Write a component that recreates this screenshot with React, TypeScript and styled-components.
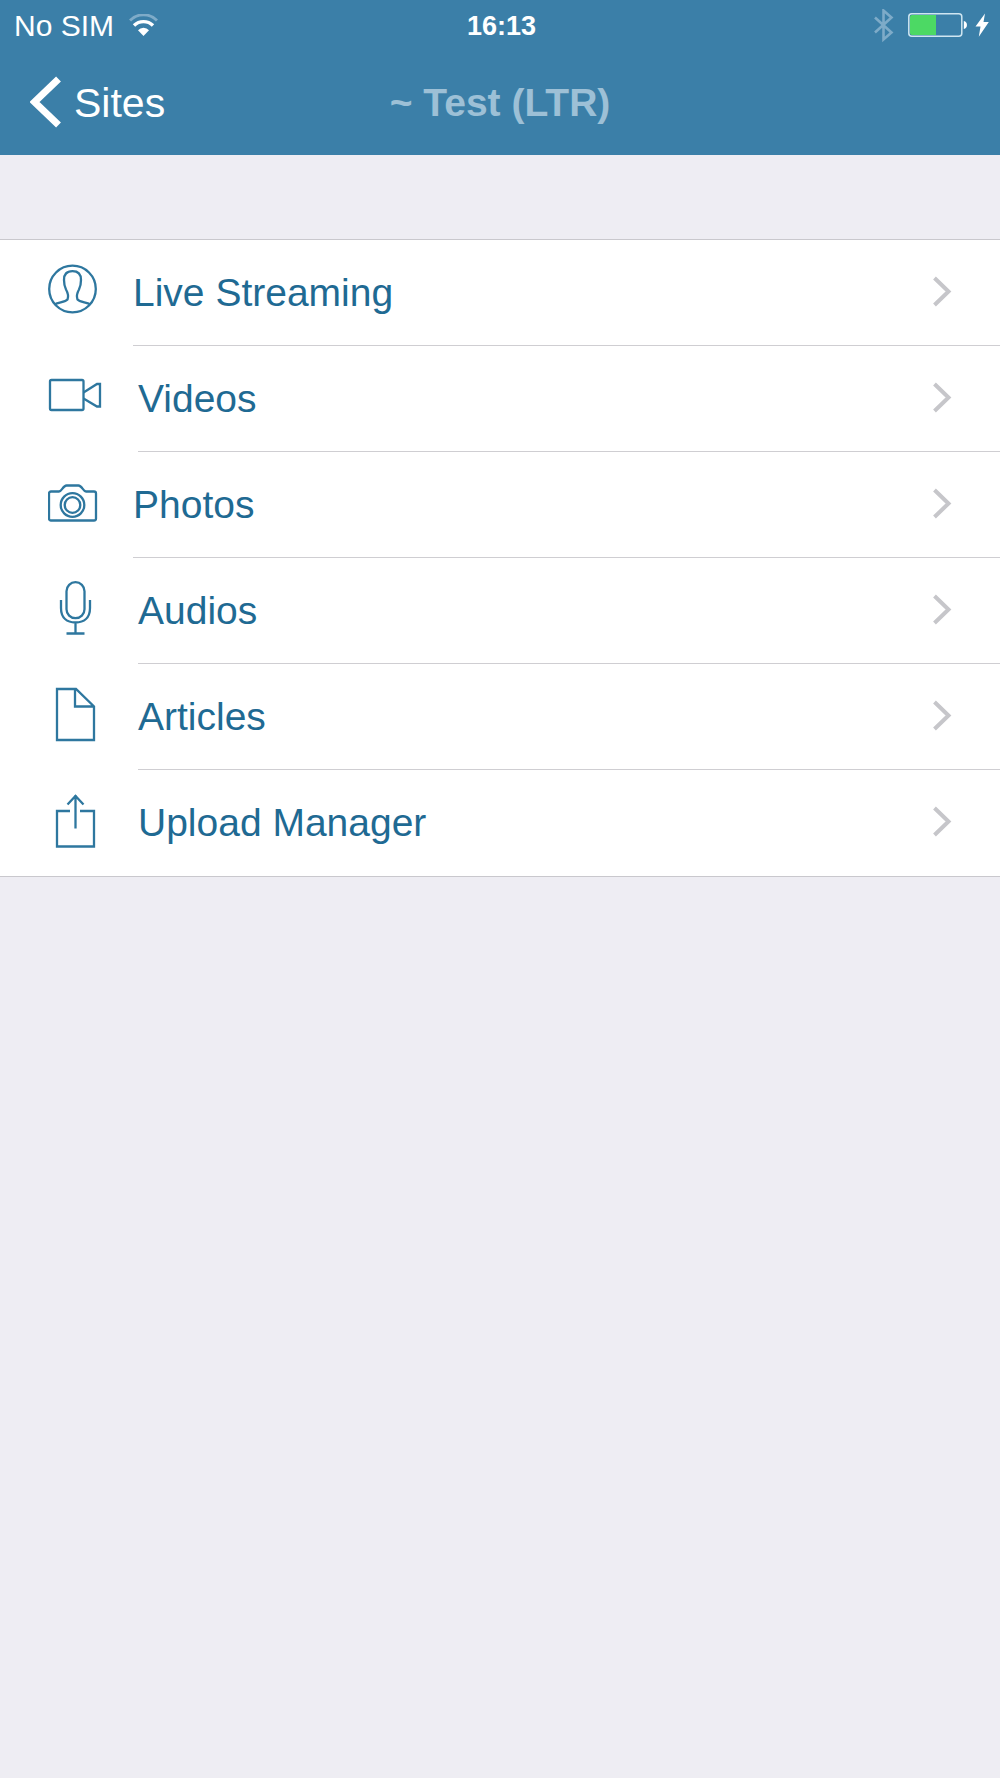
import React from "react";
import styled, { createGlobalStyle } from "styled-components";

const GlobalStyle = createGlobalStyle`
  *, *::before, *::after { box-sizing: border-box; }
  body {
    margin: 0;
    background: #eeedf3;
    font-family: "Liberation Sans", Arial, Helvetica, sans-serif;
  }
`;

const Page = styled.div`
  min-height: 100vh;
  background: #eeedf3;
`;

const Header = styled.header`
  background: #3b7fa8;
  color: #fff;
`;

const Bar = styled.div<{ $height: number }>`
  display: grid;
  grid-template-columns: 1fr auto 1fr;
  align-items: center;
  height: ${(p) => p.$height}px;
`;

const StatusBar = styled(Bar)`
  padding: 0 11px 0 14px;
`;

const NavBar = styled(Bar)`
  padding: 0 30px;
`;

const Cluster = styled.div<{ $end?: boolean; $gap: number }>`
  display: flex;
  align-items: center;
  justify-content: ${(p) => (p.$end ? "flex-end" : "flex-start")};
  gap: ${(p) => p.$gap}px;
`;

const Carrier = styled.span`
  font-size: 30px;
  line-height: 34px;
`;

const Clock = styled.time`
  font-size: 27px;
  line-height: 34px;
  font-weight: 700;
`;

const BackButton = styled.button`
  display: flex;
  align-items: center;
  justify-self: start;
  gap: 12px;
  padding: 0;
  border: 0;
  background: none;
  color: inherit;
  font: inherit;
  font-size: 41px;
  line-height: 50px;
  cursor: pointer;
`;

const Title = styled.h1`
  margin: 0;
  font-size: 39px;
  line-height: 50px;
  font-weight: 700;
  color: #9dc0d6;
`;

const Menu = styled.ul`
  list-style: none;
  margin: 84px 0 0;
  padding: 0;
  background: #fff;
  border-top: 1px solid #c9c8cd;
  border-bottom: 1px solid #c9c8cd;
`;

const Row = styled.a`
  display: flex;
  align-items: stretch;
  gap: 35px;
  padding-left: 48px;
  color: #1f6a93;
  font-size: 39px;
  line-height: 45px;
  text-decoration: none;
`;

const IconSlot = styled.span<{ $width: number }>`
  display: flex;
  align-items: center;
  flex: 0 0 ${(p) => p.$width}px;
`;

const RowBody = styled.span`
  display: flex;
  flex: 1;
  align-items: center;
  justify-content: space-between;
  padding: 30px 48px 30px 0;
  border-bottom: 1px solid #cfced2;

  li:last-child & {
    border-bottom-color: transparent;
  }
`;

const Drawing = styled.svg`
  display: block;
  flex: none;
  fill: none;
`;

const icons = {
  person: (
    <>
      <circle cx="24.5" cy="26" r="23.3" />
      <path d="M6.500 41.500C11 39.300 17.500 39 19.500 36.500C20.800 33 20 30 18 26.500C16.500 23.500 16 21.500 16 17C16 11 18.500 8.200 24.500 8.200S33 11 33 17C33 21.500 32.500 23.500 31 26.500C29 30 28.200 33 29.500 36.500C31.500 39 38 39.300 42.500 41.500" />
    </>
  ),
  video: (
    <>
      <rect x="2" y="11" width="33.500" height="30" rx="1.500" />
      <path d="M35.500 23.500L49 15H52V37.500H49L35.500 29.500" />
    </>
  ),
  camera: (
    <>
      <path d="M3 16.500H11C14 16.500 15 10.500 18.500 10.500H30.500C34 10.500 35 16.500 38 16.500H46A2 2 0 0 1 48 18.500V43.500A2 2 0 0 1 46 45.500H3A2 2 0 0 1 1 43.500V18.500A2 2 0 0 1 3 16.500Z" />
      <circle cx="24.500" cy="30" r="11.800" />
      <circle cx="24.500" cy="30" r="7.800" />
    </>
  ),
  microphone: (
    <>
      <rect x="18.500" y="1.200" width="18" height="36" rx="9" />
      <path d="M13 19V27C13 37 19 41.500 27.500 41.500S42 37 42 27V19M27.500 41.500V52.500M18.500 52.500H36.500" />
    </>
  ),
  page: <path d="M9 2H28L46 19.500V53H9ZM27 2V19.500H46" />,
  upload: <path d="M22 18H9V53.500H46V18H32M27.500 35.500V2M19.500 11.500L27.500 3L35.500 11.500" />,
};

type IconName = keyof typeof icons;

const items: { label: string; icon: IconName; width: number }[] = [
  { label: "Live Streaming", icon: "person", width: 50 },
  { label: "Videos", icon: "video", width: 55 },
  { label: "Photos", icon: "camera", width: 50 },
  { label: "Audios", icon: "microphone", width: 55 },
  { label: "Articles", icon: "page", width: 55 },
  { label: "Upload Manager", icon: "upload", width: 55 },
];

const WifiIcon = () => (
  <Drawing width="29" height="24" viewBox="0 0 29 24" aria-hidden="true">
    <path d="M1 6.500A19 19 0 0 1 28 6.500" stroke="#7eabc8" strokeWidth="3" />
    <path d="M5 11.500A13.500 13.500 0 0 1 24 11.500" stroke="#fff" strokeWidth="3.400" />
    <path d="M9 16.300A7.300 7.300 0 0 1 20 16.300L14.500 22Z" fill="#fff" />
  </Drawing>
);

const BluetoothIcon = () => (
  <Drawing width="20" height="34" viewBox="0 0 20 34" aria-hidden="true">
    <path d="M1 8.500L17.500 23.500L9.500 30.500V1.500L17.500 8.500L1 23.500" stroke="#7eabc8" strokeWidth="2.600" />
  </Drawing>
);

const BatteryIcon = () => (
  <Drawing width="60" height="26" viewBox="0 0 60 26" aria-hidden="true">
    <rect x="0.800" y="0.800" width="53" height="22.400" rx="3" stroke="#cfe6f1" strokeWidth="1.500" />
    <path d="M4 2H28V22H4A2 2 0 0 1 2 20V4A2 2 0 0 1 4 2Z" fill="#4cd964" />
    <path d="M55.800 8C60 8.500 60 15.500 55.800 16Z" fill="#fff" />
  </Drawing>
);

const BoltIcon = () => (
  <Drawing width="14" height="26" viewBox="0 0 14 26" aria-hidden="true">
    <path d="M10 0.500L0.500 13.500H5.500L3.800 23.800L13.800 9H8.500Z" fill="#fff" />
  </Drawing>
);

export default function App() {
  return (
    <Page>
      <GlobalStyle />
      <Header>
        <StatusBar $height={51}>
          <Cluster $gap={15}>
            <Carrier>No SIM</Carrier>
            <WifiIcon />
          </Cluster>
          <Clock>16:13</Clock>
          <Cluster $end $gap={14}>
            <BluetoothIcon />
            <Cluster $gap={7}>
              <BatteryIcon />
              <BoltIcon />
            </Cluster>
          </Cluster>
        </StatusBar>
        <NavBar $height={104}>
          <BackButton type="button">
            <Drawing width="32" height="54" viewBox="0 0 32 54" aria-hidden="true">
              <path d="M28.500 3L4.500 26L28.500 49" stroke="#fff" strokeWidth="7" />
            </Drawing>
            Sites
          </BackButton>
          <Title>~ Test (LTR)</Title>
        </NavBar>
      </Header>
      <Menu>
        {items.map(({ label, icon, width }) => (
          <li key={label}>
            <Row href="#">
              <IconSlot $width={width}>
                <Drawing
                  width={width}
                  height="60"
                  viewBox={`0 0 ${width} 60`}
                  stroke="#2e779f"
                  strokeWidth="2.300"
                  aria-hidden="true"
                >
                  {icons[icon]}
                </Drawing>
              </IconSlot>
              <RowBody>
                {label}
                <Drawing width="20" height="34" viewBox="0 0 20 34" aria-hidden="true">
                  <path d="M2.500 2L16.500 15.500L2.500 29" stroke="#c6c6ca" strokeWidth="4" />
                </Drawing>
              </RowBody>
            </Row>
          </li>
        ))}
      </Menu>
    </Page>
  );
}
